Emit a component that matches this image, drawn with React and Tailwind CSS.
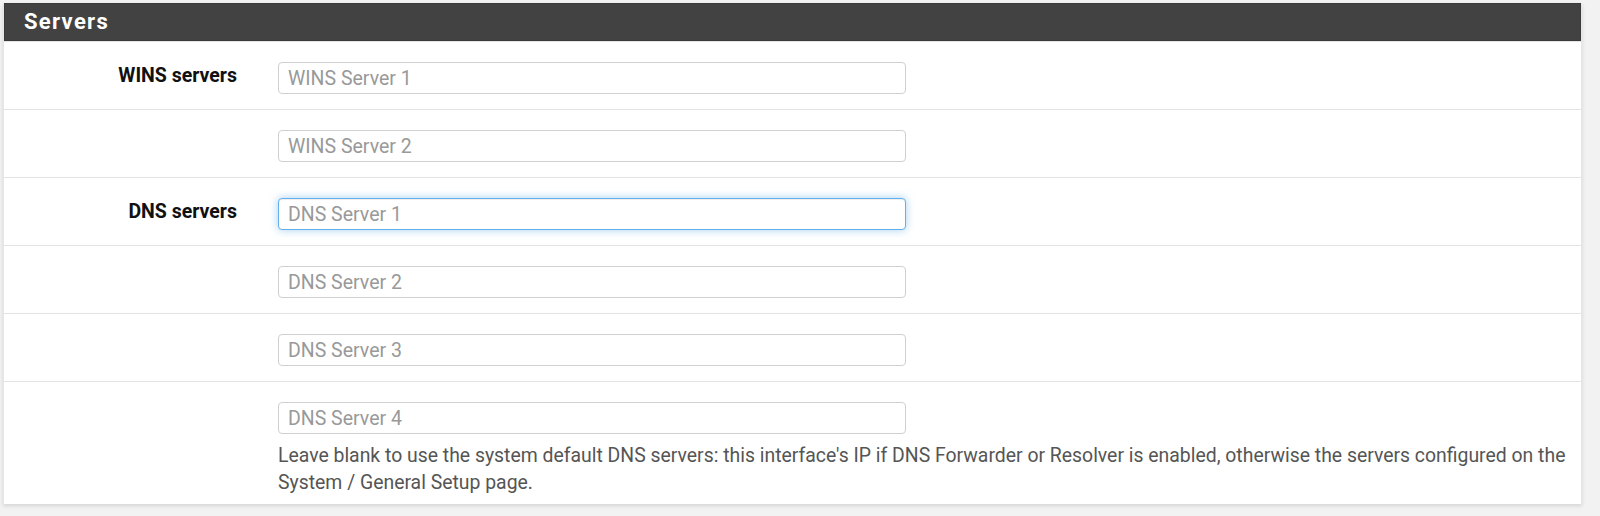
import React from "react";

const rows = [
  { label: "WINS servers", placeholder: "WINS Server 1" },
  { label: "", placeholder: "WINS Server 2" },
  { label: "DNS servers", placeholder: "DNS Server 1", focused: true },
  { label: "", placeholder: "DNS Server 2" },
  { label: "", placeholder: "DNS Server 3" },
  { label: "", placeholder: "DNS Server 4", help: true },
];

function Row({ label, placeholder, focused, help }) {
  return (
    <div className={"flex border-t border-[#e4e4e4] pt-[20px] " + (help ? "pb-[8px]" : "pb-[15px]")}>
      <div className="w-[233px] shrink-0 text-right text-[19.5px] font-bold leading-[28px] text-[#111]">
        {label}
      </div>
      <div className="flex-1 pl-[41px] pr-[10px]">
        <input
          type="text"
          placeholder={placeholder}
          className={
            "block h-[32px] w-[628px] rounded-[4px] border bg-white px-[9px] text-[19.5px] text-[#555] outline-none placeholder:text-[#999] " +
            (focused
              ? "border-[#66afe9] shadow-[inset_0_1px_1px_rgba(0,0,0,0.075),0_0_8px_rgba(102,175,233,0.6)]"
              : "border-[#d0d0d0]")
          }
        />
        {help && (
          <p className="mt-[8px] text-[19.4px] leading-[27px] text-[#555]">
            Leave blank to use the system default DNS servers: this interface's IP if DNS Forwarder or Resolver is enabled, otherwise the servers configured on the System / General Setup page.
          </p>
        )}
      </div>
    </div>
  );
}

export default function App() {
  return (
    <div className="min-h-[516px] bg-[#f2f2f2] pl-[3px] pr-[18px] pt-[3px]" style={{ fontFamily: "Roboto, 'Liberation Sans', sans-serif" }}>
      <div className="bg-white shadow-[0_2px_4px_rgba(0,0,0,0.12)] border-x border-[#e6e6e6]">
        <div className="h-[38px] bg-[#424242] border border-[#3a3a3a] pl-[19px] text-[22px] font-bold leading-[36px] tracking-[1.3px] text-white">
          Servers
        </div>
        {rows.map((r, i) => (
          <Row key={i} {...r} />
        ))}
      </div>
    </div>
  );
}
